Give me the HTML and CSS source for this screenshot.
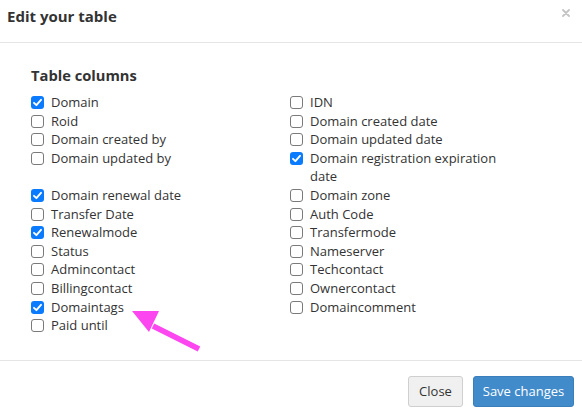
FILE: index.html
```html
<!DOCTYPE html>
<html lang="en">
<head>
<meta charset="utf-8">
<title>Edit your table</title>
<link rel="stylesheet" href="styles.css">
</head>
<body>
<div class="modal">
  <header class="modal-header">
    <h1 class="modal-title">Edit your table</h1>
    <span class="close-x" aria-label="Close">
      <svg width="8" height="8" viewBox="0 0 8 8"><path d="M1 1L7 7M7 1L1 7" stroke="#c4c4c4" stroke-width="1.8" stroke-linecap="round"/></svg>
    </span>
  </header>
  <main class="modal-body">
    <h2 class="section-title">Table columns</h2>
    <div class="columns">
      <label class="opt"><span class="box on"></span><span>Domain</span></label>
      <label class="opt"><span class="box"></span><span>IDN</span></label>
      <label class="opt"><span class="box"></span><span>Roid</span></label>
      <label class="opt"><span class="box"></span><span>Domain created date</span></label>
      <label class="opt"><span class="box"></span><span>Domain created by</span></label>
      <label class="opt"><span class="box"></span><span>Domain updated date</span></label>
      <label class="opt"><span class="box"></span><span>Domain updated by</span></label>
      <label class="opt"><span class="box on"></span><span>Domain registration expiration date</span></label>
      <label class="opt"><span class="box on"></span><span>Domain renewal date</span></label>
      <label class="opt"><span class="box"></span><span>Domain zone</span></label>
      <label class="opt"><span class="box"></span><span>Transfer Date</span></label>
      <label class="opt"><span class="box"></span><span>Auth Code</span></label>
      <label class="opt"><span class="box on"></span><span>Renewalmode</span></label>
      <label class="opt"><span class="box"></span><span>Transfermode</span></label>
      <label class="opt"><span class="box"></span><span>Status</span></label>
      <label class="opt"><span class="box"></span><span>Nameserver</span></label>
      <label class="opt"><span class="box"></span><span>Admincontact</span></label>
      <label class="opt"><span class="box"></span><span>Techcontact</span></label>
      <label class="opt"><span class="box"></span><span>Billingcontact</span></label>
      <label class="opt"><span class="box"></span><span>Ownercontact</span></label>
      <label class="opt"><span class="box on"></span><span>Domaintags</span></label>
      <label class="opt"><span class="box"></span><span>Domaincomment</span></label>
      <label class="opt"><span class="box"></span><span>Paid until</span></label>
    </div>
  </main>
  <footer class="modal-footer">
    <button class="btn btn-default">Close</button>
    <button class="btn btn-primary">Save changes</button>
  </footer>
  <svg class="arrow" width="80" height="45" viewBox="0 0 80 45">
    <path d="M68 40L22 17" stroke="#fc46f0" stroke-width="5.5" stroke-linecap="butt"/>
    <polygon points="1,2 28,2 18,23" fill="#fc46f0"/>
  </svg>
</div>
</body>
</html>
```
FILE: styles.css
```css
* { box-sizing: border-box; }
html, body { margin: 0; padding: 0; background: #fff; }
body {
  font-family: "Open Sans", "Liberation Sans", sans-serif;
  font-size: 13px;
  line-height: 18.6px;
  color: #333;
}
.modal {
  position: relative;
  width: 582px;
  height: 415px;
  display: flex;
  flex-direction: column;
}
.modal-header {
  height: 43px;
  border-bottom: 1px solid #e5e5e5;
  display: flex;
  justify-content: space-between;
  align-items: flex-start;
  padding: 6px 12px 0 7px;
}
.modal-title {
  margin: 0;
  font-size: 15px;
  line-height: 20px;
  font-weight: 700;
  color: #333;
}
.close-x {
  display: flex;
  margin-top: 3px;
}
.modal-body {
  flex: 1;
  padding: 22px 31px 0 31px;
}
.section-title {
  margin: 0 0 8px 0;
  font-size: 14.7px;
  line-height: 20px;
  font-weight: 700;
  color: #333;
}
.columns {
  display: grid;
  grid-template-columns: 259px 222px;
}
.opt {
  display: flex;
  align-items: flex-start;
}
.box {
  flex: none;
  width: 13px;
  height: 13px;
  margin: 3px 7px 0 0;
  border: 1px solid #7a7a7a;
  border-radius: 3px;
  background: #fff;
}
.box.on {
  border: none;
  background: #0a7aff url("data:image/svg+xml;utf8,<svg xmlns='http://www.w3.org/2000/svg' width='13' height='13' viewBox='0 0 13 13'><path d='M3 6.8L5.4 9.2L10 3.8' fill='none' stroke='white' stroke-width='1.9' stroke-linecap='round' stroke-linejoin='round'/></svg>") no-repeat center;
}
.modal-footer {
  height: 55px;
  border-top: 1px solid #e5e5e5;
  display: flex;
  justify-content: flex-end;
  align-items: flex-start;
  gap: 10px;
  padding: 15px 8px 0 0;
}
.btn {
  font-family: inherit;
  font-size: 13px;
  height: 31px;
  padding: 0;
  border-radius: 3px;
  border: 1px solid #ccc;
  line-height: 29px;
  white-space: nowrap;
  text-align: center;
}
.btn-default {
  width: 55px;
  background: #f0f0f0;
  color: #333;
  border-color: #cfcfcf;
}
.btn-primary {
  width: 101px;
  background: #428bca;
  color: #fff;
  border-color: #3a7fbb;
}
.arrow {
  position: absolute;
  left: 131px;
  top: 309px;
}
```
